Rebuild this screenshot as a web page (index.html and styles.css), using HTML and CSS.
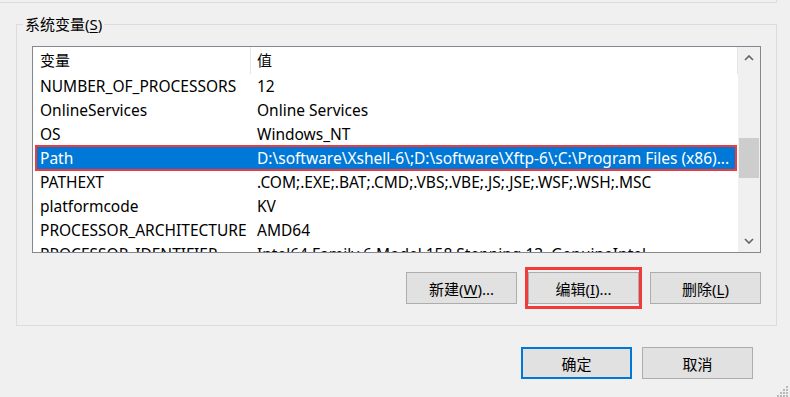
FILE: index.html
```html
<!DOCTYPE html>
<html lang="zh-CN">
<head>
    <meta charset="UTF-8">
    <meta name="viewport" content="width=device-width, initial-scale=1.0">
    <title>环境变量</title>
    <link rel="stylesheet" href="styles.css">
</head>
<body>

<div class="top-group"></div>

<fieldset class="group">
    <legend>系统变量(<u>S</u>)</legend>

    <div class="list">
        <div class="list-body">
            <div class="list-head">
                <div>变量</div>
                <div>值</div>
            </div>
            <div class="row"><div>NUMBER_OF_PROCESSORS</div><div>12</div></div>
            <div class="row"><div>OnlineServices</div><div>Online Services</div></div>
            <div class="row"><div>OS</div><div>Windows_NT</div></div>
            <div class="row selected"><div>Path</div><div>D:\software\Xshell-6\;D:\software\Xftp-6\;C:\Program Files (x86)...</div></div>
            <div class="row"><div>PATHEXT</div><div>.COM;.EXE;.BAT;.CMD;.VBS;.VBE;.JS;.JSE;.WSF;.WSH;.MSC</div></div>
            <div class="row"><div>platformcode</div><div>KV</div></div>
            <div class="row"><div>PROCESSOR_ARCHITECTURE</div><div>AMD64</div></div>
            <div class="row"><div>PROCESSOR_IDENTIFIER</div><div>Intel64 Family 6 Model 158 Stepping 13, GenuineIntel</div></div>
        </div>
        <div class="scrollbar">
            <div class="arrow">
                <svg width="10" height="6" viewBox="0 0 10 6"><path d="M1 5 L5 1 L9 5" fill="none" stroke="#606060" stroke-width="1.6"/></svg>
            </div>
            <div class="track"><div class="thumb"></div></div>
            <div class="arrow">
                <svg width="10" height="6" viewBox="0 0 10 6"><path d="M1 1 L5 5 L9 1" fill="none" stroke="#606060" stroke-width="1.6"/></svg>
            </div>
        </div>
    </div>

    <div class="group-buttons">
        <button class="btn">新建(<u>W</u>)...</button>
        <button class="btn marked">编辑(<u>I</u>)...</button>
        <button class="btn">删除(<u>L</u>)</button>
    </div>
</fieldset>

<div class="dialog-buttons">
    <button class="btn default">确定</button>
    <button class="btn">取消</button>
</div>

<div class="grip">
    <svg width="12" height="11" viewBox="0 0 12 11">
        <rect x="9" y="0" width="2" height="2" fill="#b8b8b8"/>
        <rect x="6" y="3" width="2" height="2" fill="#b8b8b8"/>
        <rect x="9" y="3" width="2" height="2" fill="#b8b8b8"/>
        <rect x="3" y="6" width="2" height="2" fill="#b8b8b8"/>
        <rect x="6" y="6" width="2" height="2" fill="#b8b8b8"/>
        <rect x="9" y="6" width="2" height="2" fill="#b8b8b8"/>
        <rect x="0" y="9" width="2" height="2" fill="#b8b8b8"/>
        <rect x="3" y="9" width="2" height="2" fill="#b8b8b8"/>
        <rect x="6" y="9" width="2" height="2" fill="#b8b8b8"/>
        <rect x="9" y="9" width="2" height="2" fill="#b8b8b8"/>
    </svg>
</div>

</body>
</html>
```

FILE: styles.css
```css
body { margin: 0; width: 790px; height: 397px; overflow: hidden; position: relative; background: #f0f0f0; color: #000; font-family: "Noto Sans", "Noto Sans CJK SC", sans-serif; font-size: 15px; }
u { text-decoration-thickness: 1px; text-underline-offset: 2px; }

.top-group { width: 776px; height: 2px; border-bottom: 1px solid #dcdcdc; border-right: 1px solid #dcdcdc; }

.group { margin: 11px 0 0 16px; width: 761px; min-width: 0; box-sizing: border-box; border: 1px solid #dcdcdc; padding: 0 15px 21px 15px; }
.group legend { margin-left: -9px; padding: 0 2px; height: 21px; line-height: 21px; }

.list { display: flex; height: 207px; box-sizing: border-box; margin-top: 11px; border: 1px solid #828790; background: #fff; }
.list-body { flex: 1; min-width: 0; overflow: hidden; }
.list-head { display: grid; grid-template-columns: 218px 1fr; height: 27px; line-height: 27px; }
.list-head div { padding-left: 7px; border-right: 1px solid #e5e5e5; }
.list-head div + div { padding-left: 6px; }
.row { display: grid; grid-template-columns: 217px 1fr; height: 24px; line-height: 24px; margin: 0 2px 0 3px; font-size: 15.5px; }
.row div { padding-left: 4px; white-space: nowrap; overflow: hidden; text-overflow: ellipsis; }
.row div + div { padding-right: 2px; }
.row.selected { background: #0078d7; color: #fff; outline: 2px solid #f23a3a; outline-offset: -1px; }

.scrollbar { width: 22px; display: flex; flex-direction: column; background: #f0f0f0; }
.arrow { height: 22px; display: flex; align-items: center; justify-content: center; }
.track { flex: 1; padding-top: 69px; }
.thumb { height: 40px; margin: 0 1px; background: #cdcdcd; }

.group-buttons { display: flex; justify-content: flex-end; gap: 11px; margin-top: 19px; }
.btn { width: 111px; height: 32px; box-sizing: border-box; padding: 0; border: 1px solid #adadad; background: #e1e1e1; color: #000; font: inherit; }
.btn.marked { position: relative; }
.btn.marked::after { content: ""; position: absolute; top: -6px; bottom: -6px; left: -4px; right: -4px; border: 3px solid #f23a3a; }
.btn.default { border: 2px solid #0078d7; }

.dialog-buttons { display: flex; justify-content: flex-end; gap: 10px; margin-top: 21px; padding-right: 37px; }

.grip { position: absolute; right: 1px; bottom: 0; line-height: 0; }
```
